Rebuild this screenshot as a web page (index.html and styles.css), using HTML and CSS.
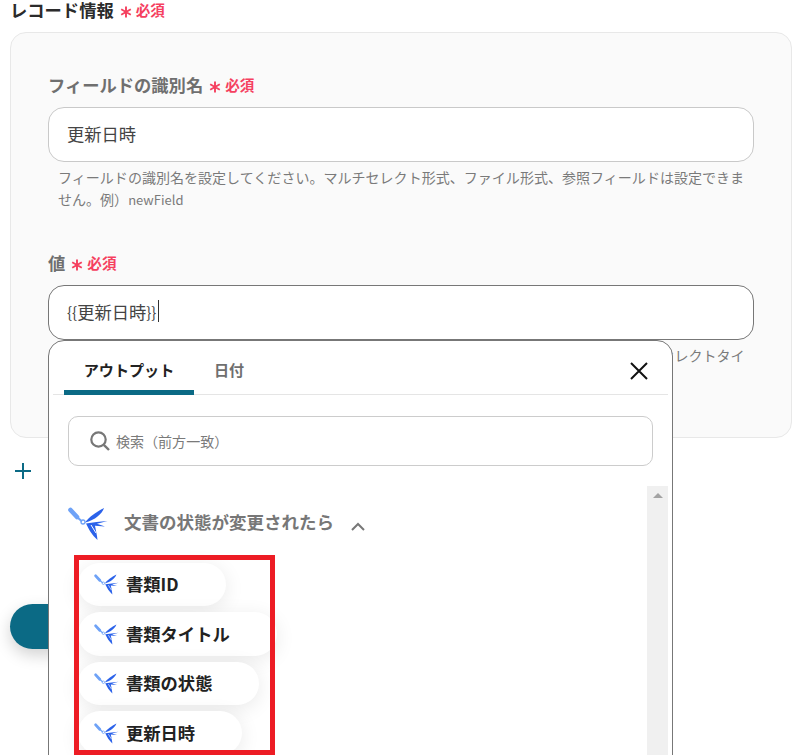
FILE: index.html
```html
<!DOCTYPE html>
<html lang="ja">
<head>
<meta charset="utf-8">
<title>レコード情報</title>
<link rel="stylesheet" href="styles.css">
</head>
<body>
<svg class="defs" width="0" height="0" aria-hidden="true">
  <symbol id="star" viewBox="0 0 12 12">
    <path d="M6 .5v11M1.2 3.2l9.6 5.6M10.8 3.2L1.2 8.8" fill="none" stroke="#f5405f" stroke-width="1.9"/>
  </symbol>
  <symbol id="bird" viewBox="0 0 40 34">
    <path d="M2.500 3L9 10" stroke="#6ea2f7" stroke-width="4.600" stroke-linecap="round" fill="none"/>
    <path d="M9 10L14 14.500" stroke="#6ea2f7" stroke-width="2" fill="none"/>
    <circle cx="15" cy="15" r="2" fill="none" stroke="#6ea2f7" stroke-width="1.300"/>
    <path d="M36 1C34 7 27 13 17 15.500C21 10 28 5 36 1Z" fill="#2b62ea"/>
    <path d="M18 16.500C25 15.500 32 14.500 39.500 14L29 16.800L37 19.500L27 18.800C28 24 29 28 29.500 33C24 28 21 23 18 16.500Z" fill="#2b62ea"/>
    <path d="M23 18L28 26" stroke="#fff" stroke-width="1" fill="none"/>
  </symbol>
</svg>
<main class="page">
  <h2 class="title">レコード情報<svg class="star"><use href="#star"/></svg><span class="req">必須</span></h2>
  <section class="card">
    <div class="field">
      <label class="label">フィールドの識別名<svg class="star"><use href="#star"/></svg><span class="req">必須</span></label>
      <div class="input">更新日時</div>
      <p class="help">フィールドの識別名を設定してください。マルチセレクト形式、ファイル形式、参照フィールドは設定できません。例）<span class="latin">newField</span></p>
    </div>
    <div class="field field-value">
      <label class="label">値<svg class="star"><use href="#star"/></svg><span class="req">必須</span></label>
      <div class="input input-active"><span class="brace">{{</span>更新日時<span class="brace">}}</span><span class="caret"></span></div>
      <p class="help">フィールドの値を設定してください。文字列・数値・テキストなどの形式で入力します。マルチセレクトタイプの場合は値を指定します。</p>
      <div class="popup">
        <div class="tabs">
          <span class="tab tab-on">アウトプット</span>
          <span class="tab">日付</span>
          <svg class="close" viewBox="0 0 18 18"><path d="M1 1l16 16M17 1L1 17" stroke="#111" stroke-width="2" fill="none"/></svg>
        </div>
        <div class="search">
          <svg class="lens" viewBox="0 0 20 20"><circle cx="8.500" cy="8.500" r="7.200" fill="none" stroke="#777" stroke-width="2.200"/><path d="M13.800 13.800L19 19" stroke="#777" stroke-width="2.400"/></svg>
          <span>検索（前方一致）</span>
        </div>
        <div class="list-wrap">
          <div class="list">
            <div class="group">
              <svg class="bird-lg"><use href="#bird"/></svg>
              <span class="group-name">文書の状態が変更されたら</span>
              <svg class="chev" viewBox="0 0 14 9"><path d="M1 8l6-6 6 6" fill="none" stroke="#777" stroke-width="2"/></svg>
            </div>
            <ul class="chips">
              <li class="chip"><svg class="bird-sm"><use href="#bird"/></svg>書類ID</li>
              <li class="chip"><svg class="bird-sm"><use href="#bird"/></svg>書類タイトル</li>
              <li class="chip"><svg class="bird-sm"><use href="#bird"/></svg>書類の状態</li>
              <li class="chip"><svg class="bird-sm"><use href="#bird"/></svg>更新日時</li>
            </ul>
          </div>
          <div class="scrollbar"><i class="arrow"></i></div>
          <div class="annotation"></div>
        </div>
      </div>
    </div>
  </section>
  <div class="add"><svg viewBox="0 0 16 16"><path d="M8 0v16M0 8h16" stroke="#0b6a85" stroke-width="2" fill="none"/></svg></div>
  <button class="primary" type="button"></button>
</main>
</body>
</html>
```
FILE: styles.css
```css
* { box-sizing: border-box; }
html, body { margin: 0; height: 755px; overflow: hidden; background: #fff; }
body {
  font-family: "Noto Sans CJK JP", "Noto Sans", sans-serif;
  font-size: 17.300px;
  color: #333;
}
.defs { position: absolute; }
.page { height: 755px; overflow: hidden; padding: 0 19px 0 10px; }
.title {
  display: flex;
  align-items: center;
  height: 20px;
  margin: 0 0 12px;
  font-size: 17.300px;
  line-height: 20px;
  font-weight: 700;
  color: #2b2b2b;
}
.star { flex: none; width: 12px; height: 12px; margin: 3px 4px 0 6px; }
.req { font-size: 14.600px; font-weight: 700; color: #f5405f; }
.card {
  height: 406px;
  padding: 42px 37px 0;
  background: #fafafa;
  border: 1px solid #e8e8e8;
  border-radius: 16px;
}
.field { position: relative; margin-bottom: 42px; }
.label {
  display: flex;
  align-items: center;
  height: 20px;
  font-size: 17.300px;
  line-height: 20px;
  font-weight: 700;
  color: #6f6f6f;
}
.input {
  display: flex;
  align-items: center;
  height: 55px;
  margin-top: 12px;
  padding: 0 18px 3px;
  background: #fff;
  border: 1px solid #c9c9c9;
  border-radius: 16px;
  color: #444;
}
.input-active { border-color: #777; }
.brace { font-size: 15px; }
.caret { width: 1px; height: 22px; margin-left: 2px; background: #333; }
.help {
  margin: 4px 0 0;
  padding: 0 0 0 10px;
  font-size: 14.040px;
  line-height: 22px;
  color: #7a7a7a;
}
.field-value .help { padding-left: 12px; }
.latin { font-size: 13px; }
.popup {
  position: absolute;
  left: 0;
  top: 87px;
  width: 625px;
  height: 500px;
  padding: 0 4px;
  background: #fff;
  border: 1.500px solid #777;
  border-radius: 16px 16px 0 0;
}
.tabs {
  position: relative;
  display: flex;
  height: 54px;
  border-bottom: 1px solid #e5e5e5;
  padding-left: 11px;
}
.tab {
  width: 130px;
  height: 54px;
  padding-top: 17px;
  text-align: center;
  font-size: 15.120px;
  line-height: 22px;
  font-weight: 700;
  color: #6f6f6f;
}
.tab + .tab { width: 70px; }
.tab-on { color: #222; border-bottom: 5px solid #0b6a85; border-radius: 5px 5px 0 0; }
.close { position: absolute; right: 20px; top: 21px; width: 18px; height: 18px; }
.search {
  display: flex;
  align-items: center;
  height: 50px;
  margin: 21px 15px 20px;
  padding-left: 21px;
  border: 1px solid #ccc;
  border-radius: 10px;
  font-size: 14.040px;
  color: #7a7a7a;
}
.lens { width: 20px; height: 20px; margin-right: 6px; }
.list-wrap { position: relative; display: flex; height: 269px; }
.list { flex: 1; padding: 20px 0 0 15px; }
.group { display: flex; align-items: center; height: 35px; margin-bottom: 22px; }
.bird-lg { width: 40px; height: 34px; }
.group-name { margin: 0 0 4px 16px; font-size: 17.500px; font-weight: 700; color: #777; }
.chev { width: 14px; height: 9px; margin-left: 17px; margin-top: 5px; }
.chips { margin: 0 0 0 10px; padding: 0; list-style: none; display: flex; flex-direction: column; align-items: flex-start; gap: 6.200px; }
.chip {
  display: flex;
  align-items: center;
  height: 43.300px;
  padding: 0 47px 2px 16px;
  background: #fff;
  border-radius: 22px;
  box-shadow: 0 4px 20px rgba(0, 0, 0, .09);
  font-weight: 700;
  color: #222;
}
.bird-sm { width: 25px; height: 21px; margin: 2px 7px 0 0; }
.scrollbar { flex: none; width: 21px; background: #f0f0f0; display: flex; justify-content: center; padding-top: 7px; }
.arrow { width: 0; height: 0; border: 5px solid transparent; border-top: 0; border-bottom: 5px solid #a3a3a3; }
.annotation {
  position: absolute;
  left: 21px;
  top: 69px;
  width: 201px;
  height: 200px;
  border: 5px solid #ed1c24;
  pointer-events: none;
}
.add { height: 16px; margin: 25px 0 0 5px; }
.add svg { display: block; width: 16px; height: 16px; }
.primary {
  display: block;
  width: 300px;
  height: 45px;
  margin-top: 125px;
  background: #0b6a85;
  border: 0;
  border-radius: 23px;
  box-shadow: 0 6px 16px rgba(0, 0, 0, .18);
}
```
